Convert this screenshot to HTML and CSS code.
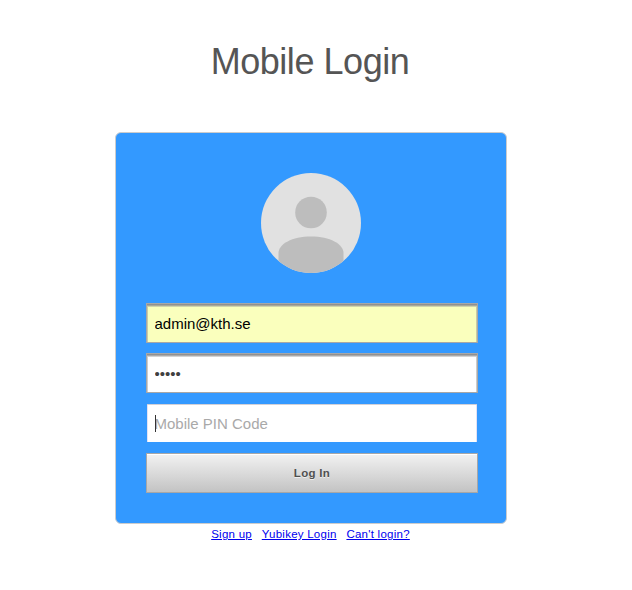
FILE: index.html
```html
<!DOCTYPE html>
<html lang="en">
<head>
<meta charset="utf-8">
<title>Mobile Login</title>
<link rel="stylesheet" href="styles.css">
</head>
<body>
<main class="page">
  <h1 class="title">Mobile Login</h1>
  <form class="card">
    <svg class="avatar" viewBox="0 0 100 100" aria-hidden="true">
      <defs><clipPath id="disc"><circle cx="50" cy="50" r="50"/></clipPath></defs>
      <circle cx="50" cy="50" r="50" fill="#e1e1e1"/>
      <g clip-path="url(#disc)" fill="#bdbdbd">
        <circle cx="50" cy="39.5" r="15.800"/>
        <path d="M17.500 100V80C17.500 71 31 63.500 50 63.500S82.500 71 82.500 80V100Z"/>
      </g>
    </svg>
    <input class="field field-filled" type="text" value="admin@kth.se">
    <input class="field" type="password" value="admin">
    <div class="pin">
      <input class="field field-active" type="text" placeholder="Mobile PIN Code">
      <span class="caret"></span>
    </div>
    <button class="submit" type="button">Log In</button>
  </form>
  <nav class="links">
    <a href="#">Sign up</a>
    <a href="#">Yubikey Login</a>
    <a href="#">Can't login?</a>
  </nav>
</main>
</body>
</html>
```
FILE: styles.css
```css
* {
  box-sizing: border-box;
}

body {
  margin: 0;
  background: #fff;
  font-family: "Liberation Sans", Arial, sans-serif;
}

.page {
  width: 392px;
  margin-left: 115px;
  padding-top: 41px;
}

.title {
  margin: 0 0 50px;
  padding-right: 2px;
  color: #555;
  font-size: 36px;
  font-weight: 400;
  letter-spacing: -0.45px;
  line-height: 41px;
  text-align: center;
}

.card {
  display: flex;
  flex-direction: column;
  gap: 10px;
  height: 392px;
  padding: 40px 28px 0 30px;
  border: 1px solid #ccc;
  border-radius: 6px;
  background: #39f;
}

.avatar {
  display: block;
  width: 100px;
  height: 100px;
  margin: 0 0 20px 115px;
}

.field {
  display: block;
  width: 332px;
  height: 40px;
  margin: 0;
  padding: 1px 7.5px 0;
  border: 1px solid #a7a7a7;
  border-radius: 0;
  outline: 0;
  background: #fff;
  box-shadow: inset 0 1px #909090, inset 0 2px #aaa, inset 1px 0 #ccc, inset -1px 0 #ccc, inset 0 3px #d2d2d2;
  color: #404040;
  font: 15px "Liberation Sans", Arial, sans-serif;
}

.field-filled {
  background: #faffbd;
  color: #000;
  box-shadow: inset 0 1px #909090, inset 0 2px #a8a99a, inset 1px 0 #c9cca5, inset -1px 0 #c9cca5, inset 0 3px #cfd3ac;
}

.pin {
  position: relative;
}

.field-active {
  border-color: transparent;
  background-clip: padding-box;
  box-shadow: inset 0 1px #d0d0d8, inset 1px 0 #e2e2f5, inset -1px 0 #e2e2f5;
}

.field-active::placeholder {
  color: #a9a9a9;
}

.caret {
  position: absolute;
  top: 12px;
  left: 9px;
  width: 1px;
  height: 17px;
  background: #333;
}

.submit {
  width: 332px;
  height: 40px;
  margin: 0;
  padding: 0;
  border: 1px solid #a7a7a7;
  background: linear-gradient(#f2f2f2, #c3c3c3);
  box-shadow: inset 0 1px #fff;
  color: #505050;
  font: bold 11.5px "Liberation Sans", Arial, sans-serif;
  letter-spacing: 0.3px;
  text-shadow: 0 1px #eee;
}

.links {
  display: flex;
  justify-content: center;
  gap: 9.8px;
  padding-top: 3px;
  padding-right: 1px;
  font-size: 11.5px;
  letter-spacing: 0.25px;
  line-height: 14px;
}

.links a {
  color: #00e;
}
```
